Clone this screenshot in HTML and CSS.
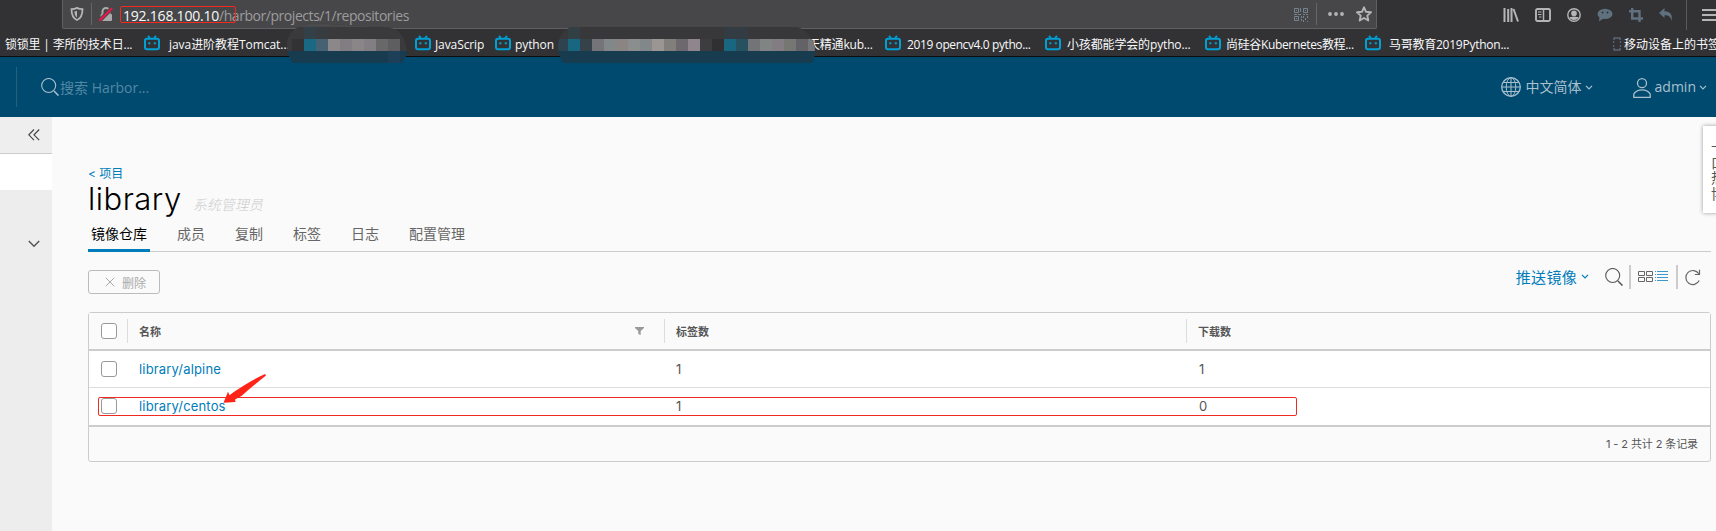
FILE: index.html
```html
<!DOCTYPE html>
<html lang="zh-CN">
<head>
<meta charset="utf-8">
<title>Harbor</title>
<link rel="stylesheet" href="styles.css">
</head>
<body>
<svg class="defs" aria-hidden="true">
  <symbol id="bili" viewBox="0 0 16 16"><path d="M4 .8 5.9 3M12 .8 10.1 3" stroke="#00a1d6" stroke-width="1.8" fill="none"/><rect x="1" y="3.7" width="14" height="10.6" rx="2" fill="none" stroke="#00a1d6" stroke-width="2"/><path d="M4.3 7.2h2v2h-2zM9.8 7.2h2v2h-2z" fill="#00a1d6"/></symbol>
  <symbol id="chev" viewBox="0 0 8 5"><path d="M1 .8l3 3 3-3" fill="none" stroke="currentColor" stroke-width="1.2"/></symbol>
  <symbol id="search" viewBox="0 0 18 18"><circle cx="7.7" cy="7.5" r="7" fill="none" stroke="currentColor" stroke-width="1.1"/><path d="M13 13l4.5 4.6" stroke="currentColor" stroke-width="1.5"/></symbol>
</svg>
<div class="browser">
  <div class="toolbar">
    <div class="urlbar">
      <svg class="shield" width="14" height="14" viewBox="0 0 14 14"><path d="M7 .9C5 2 3 2.200 1.500 2.200 1.500 7.500 2.500 11 7 13c4.500-2 5.500-5.500 5.500-10.800C11 2.200 9 2 7 .9z" fill="none" stroke="#b5b5b6" stroke-width="1.800"/><path d="M7 3.800v6.600C4.900 8.900 4.500 7 4.400 4.500 5.400 4.400 6.200 4.200 7 3.800z" fill="#b5b5b6"/></svg>
      <span class="urlsep"></span>
      <svg class="lock" width="14" height="15" viewBox="0 0 14 15"><path d="M3.500 8V4.500a3.500 3.500 0 0 1 7 0V8" fill="none" stroke="#a9a9aa" stroke-width="2"/><rect x="1.500" y="7" width="11.500" height="7" rx="1" fill="#a9a9aa"/><path d="M0 14.200 13.300.8" stroke="#474749" stroke-width="4"/><path d="M.3 13.700 13.200 1.200" stroke="#f0144b" stroke-width="2"/></svg>
      <span class="url"><b>192.168.100.10</b>/harbor/projects/1/repositories<i class="mark-url"></i></span>
      <svg class="qr" width="15" height="15" viewBox="0 0 15 15" fill="none" stroke="#76838f"><path d="M.5 1.500h4v4h-4zM9.500 1.500h4v4h-4zM.5 9.500h4v4h-4z"/><path d="M2 3.500h1M11 3.500h1M2 11.500h1M6.500 1v4M0 7.500h3m1 0h3m2 0h2m1 0h2M7.500 9v2m2-2v2m2 0v2m2-4v2m-6 1v2m2-1v2m4-1v2"/></svg>
      <span class="urlsep sep2"></span>
      <svg class="dots" width="16" height="4" viewBox="0 0 16 4" fill="#b5b5b6"><circle cx="2" cy="2" r="1.900"/><circle cx="8" cy="2" r="1.900"/><circle cx="14" cy="2" r="1.900"/></svg>
      <svg class="star" width="16" height="16" viewBox="0 0 16 16"><path d="M8 1.300l2 4.500 5 .5-3.700 3.300 1 4.900L8 12l-4.300 2.500 1-4.900L1 6.300l5-.5z" fill="none" stroke="#b5b5b6" stroke-width="1.900" stroke-linejoin="round"/></svg>
    </div>
    <div class="tools">
      <svg width="16" height="14" viewBox="0 0 16 14" stroke="#b5b5b6" stroke-width="2"><path d="M1.500 0v14M5.200 1v13M8.500 0v14M10.500 1l4.500 12.500"/></svg>
      <svg width="16" height="14" viewBox="0 0 16 14" fill="none" stroke="#b5b5b6"><rect x="1" y="1" width="14" height="12" rx="1.500" stroke-width="1.900"/><path d="M8.500 1v12" stroke-width="1.500"/><path d="M3 4h3.500M3 6.500h3.500M4 9h2.500" stroke-width="1.200"/></svg>
      <svg width="14" height="14" viewBox="0 0 14 14"><circle cx="7" cy="7" r="6.200" fill="none" stroke="#b5b5b6" stroke-width="1.400"/><circle cx="7" cy="5.400" r="2.800" fill="#b5b5b6"/><path d="M2.500 9.200C4 8.500 10 8.500 11.500 9.200 10.500 12.800 3.500 12.800 2.500 9.200z" fill="#b5b5b6"/></svg>
      <svg width="16" height="14" viewBox="0 0 16 14"><ellipse cx="8" cy="5.900" rx="7.500" ry="5.200" fill="#5f707e"/><path d="M2.500 9 2 13.500 7 10z" fill="#5f707e"/><circle cx="5.500" cy="4.500" r="1" fill="#323234"/><circle cx="10.500" cy="4.500" r="1" fill="#323234"/></svg>
      <svg width="14" height="14" viewBox="0 0 14 14" fill="none" stroke="#5f707e" stroke-width="2.4"><path d="M3.200 0v10.500H14M0 3.200h10.500V14"/></svg>
      <svg width="14" height="13" viewBox="0 0 14 13"><path d="M0 5 5.500 0v3.200C11 3.200 14 6.500 12.500 13 12 9 10 7.200 5.500 7.200V10z" fill="#5f707e"/></svg>
      <span class="toolsep"></span>
      <svg width="14" height="14" viewBox="0 0 14 14" stroke="#b5b5b6" stroke-width="2"><path d="M0 2h14M0 7h14M0 12h14"/></svg>
    </div>
  </div>
  <div class="bookmarks">
    <span class="bm bm1">锁锁里 | 李所的技术日...</span>
    <svg><use href="#bili"/></svg><span class="bm bm2">java进阶教程Tomcat...</span>
    <svg><use href="#bili"/></svg><span class="bm bm3">JavaScrip</span>
    <svg><use href="#bili"/></svg><span class="bm bm4">python</span>
    <span class="bm bm5">天精通kub...</span>
    <svg><use href="#bili"/></svg><span class="bm bm6">2019 opencv4.0 pytho...</span>
    <svg><use href="#bili"/></svg><span class="bm bm7">小孩都能学会的pytho...</span>
    <svg><use href="#bili"/></svg><span class="bm bm8">尚硅谷Kubernetes教程...</span>
    <svg><use href="#bili"/></svg><span class="bm bm9">马哥教育2019Python...</span>
    <svg class="phone" viewBox="0 0 8 14"><path d="M1 3V1h6v2M1 11v2h6v-2M.5 4v2m0 2v2m7-6v2m0 2v2" fill="none" stroke="#5a6673" stroke-width="1.500"/></svg><span class="bm bm10">移动设备上的书签</span>
  </div>
  <svg class="mosaic m1" width="120" height="41" viewBox="287 23 120 41" shape-rendering="crispEdges">
    <clipPath id="c1"><path d="M287 42C289 30 299 25 312 23L363 26 384 27C398 27 405 36 407 50 407 56 404 60 402 63H293C289 59 287 52 287 42z"/></clipPath>
    <g clip-path="url(#c1)"><path fill="#3a3a3c" d="M287 23h120v28H287z"/><path fill="#173b4f" d="M287 51h120v12H287z"/><path fill="#4a4a4c" d="M287 23h120v4H287z"/><path fill="#334047" d="M304 27h12v12h-12z"/><path fill="#363c40" d="M316 27h12v12h-12z"/><path fill="#323234" d="M292 39h12v12h-12z"/><path fill="#196884" d="M304 39h12v12h-12z"/><path fill="#466171" d="M316 39h12v12h-12z"/><path fill="#8c8889" d="M328 39h12v12h-12z"/><path fill="#817e83" d="M340 39h12v12h-12z"/><path fill="#8a8586" d="M352 39h12v12h-12z"/><path fill="#817f83" d="M364 39h12v12h-12z"/><path fill="#686868" d="M376 39h12v12h-12z"/><path fill="#5e5e60" d="M388 39h12v12h-12z"/><path fill="#1d4058" d="M388 51h12v12h-12z"/></g>
  </svg>
  <svg class="mosaic m2" width="257" height="41" viewBox="558 23 257 41" shape-rendering="crispEdges">
    <clipPath id="c2"><path d="M572 27H798C808 31 815 40 815 51 815 56 814 60 812 63H563C560 58 558 53 558 46 558 38 563 29 572 27z"/></clipPath>
    <g clip-path="url(#c2)"><path fill="#38383a" d="M558 27h257v24H558z"/><path fill="#173b4f" d="M558 51h257v12H558z"/><path fill="#2d4450" d="M558 39h10v12h-10z"/><path fill="#323f45" d="M568 27h12v12h-12z"/><path fill="#196680" d="M568 39h12v12h-12z"/><path fill="#35424a" d="M580 39h12v12h-12z"/><path fill="#747479" d="M592 39h12v12h-12z"/><path fill="#828789" d="M604 39h12v12h-12z"/><path fill="#8a8482" d="M616 39h12v12h-12z"/><path fill="#8a8e8e" d="M628 39h12v12h-12z"/><path fill="#82888a" d="M640 39h12v12h-12z"/><path fill="#9b9594" d="M652 39h12v12h-12z"/><path fill="#817f7c" d="M664 39h12v12h-12z"/><path fill="#6d686e" d="M676 39h12v12h-12z"/><path fill="#8e868c" d="M688 39h12v12h-12z"/><path fill="#3d3d3f" d="M700 39h12v12h-12z"/><path fill="#303032" d="M712 39h12v12h-12z"/><path fill="#333c42" d="M724 27h24v12h-24z"/><path fill="#196680" d="M724 39h12v12h-12z"/><path fill="#26515f" d="M736 39h12v12h-12z"/><path fill="#727478" d="M748 39h12v12h-12z"/><path fill="#808584" d="M760 39h12v12h-12z"/><path fill="#837c82" d="M772 39h12v12h-12z"/><path fill="#767673" d="M784 39h12v12h-12z"/><path fill="#636367" d="M796 39h12v12h-12z"/><path fill="#77777a" d="M808 39h7v12h-7z"/></g>
  </svg>
</div>
<header class="header">
  <span class="hsep"></span>
  <svg class="hsearch" width="18" height="18"><use href="#search"/></svg>
  <span class="placeholder">搜索 Harbor...</span>
  <div class="hmenu">
    <svg width="20" height="20" viewBox="0 0 20 20" fill="none" stroke="currentColor"><circle cx="10" cy="10" r="9.300" stroke-width="1.300"/><ellipse cx="10" cy="10" rx="4.800" ry="9.300"/><path d="M10 1v18M1 10h18M2.500 5.500h15M2.500 14.500h15"/></svg>
    <span class="lang">中文简体</span><svg class="hchev" width="8" height="5"><use href="#chev"/></svg>
    <svg class="user" width="18" height="20" viewBox="0 0 18 20" fill="none" stroke="currentColor" stroke-width="1.300"><circle cx="9" cy="5.200" r="4.500"/><path d="M.8 19.300V16c3.200-5.600 13.200-5.600 16.400 0v3.300z"/></svg>
    <span class="admin">admin</span><svg class="hchev" width="8" height="5"><use href="#chev"/></svg>
  </div>
</header>
<div class="body">
  <aside class="side">
    <div class="collapse"><svg width="12" height="12" viewBox="0 0 12 12" fill="none" stroke="#444" stroke-width="1.200"><path d="M6 .5.8 5.800 6 11.200M11.200.5 6 5.800l5.200 5.400"/></svg></div>
    <div class="current"></div>
    <div class="group"><svg width="12" height="8" viewBox="0 0 12 8"><path d="M.8 1 6 6.200 11.200 1" fill="none" stroke="#555" stroke-width="1.500"/></svg></div>
  </aside>
  <main class="main">
    <a class="back">&lt; 项目</a>
    <div class="title"><h1>library</h1><em>系统管理员</em></div>
    <nav class="tabs"><span class="on">镜像仓库</span><span>成员</span><span>复制</span><span>标签</span><span>日志</span><span>配置管理</span></nav>
    <div class="actions">
      <button class="delete"><svg width="10" height="10" viewBox="0 0 10 10"><path d="M.8.8l8.400 8.400M9.200.8.8 9.200" stroke="#aaa"/></svg>删除</button>
      <div class="right">
        <span class="push">推送镜像</span><svg class="pchev" width="8" height="5"><use href="#chev"/></svg>
        <svg class="find" width="18" height="18"><use href="#search"/></svg>
        <span class="vsep"></span>
        <svg class="cards" width="15" height="12" viewBox="0 0 15 12" fill="none" stroke="#666"><path d="M.5.5h6v4h-6zM8.500.5h6v4h-6zM.5 6.500h6v4h-6zM8.500 6.500h6v4h-6z"/></svg>
        <svg class="list" width="13" height="12" viewBox="0 0 13 12" stroke="#3a98cb"><path d="M0 .5h1m1 0h11M0 3.500h1m1 0h11M0 6.500h1m1 0h11M0 9.500h1m1 0h11"/></svg>
        <span class="vsep"></span>
        <svg class="refresh" width="16" height="17" viewBox="0 0 16 17" fill="none" stroke="#666" stroke-width="1.200"><path d="M14.200 11.500A7 7 0 1 1 13.800 4.800M14.500.8v4.700H9.800"/></svg>
      </div>
    </div>
    <section class="grid">
      <div class="row head"><span class="check"><i></i></span><span class="name">名称<svg width="9" height="8" viewBox="0 0 9 8"><path d="M0 0h9v1L5.700 4v4L3.300 7V4L0 1z" fill="#999"/></svg></span><span class="tags">标签数</span><span class="pulls">下载数</span></div>
      <div class="row"><span class="check"><i></i></span><a class="name">library/alpine</a><span class="tags">1</span><span class="pulls">1</span></div>
      <div class="row last"><span class="check"><i></i></span><a class="name">library/centos</a><span class="tags">1</span><span class="pulls">0</span></div>
      <div class="foot">1 - 2 共计 2 条记录</div>
      <div class="mark-row"></div>
      <svg class="arrow" width="44" height="31" viewBox="0 0 44 31"><path d="M42 0 43 1.500C35 8 26 15 18.500 22L12 25.500 12.500 28 .5 28.800 5 17.800 6.500 21.300 11.500 17.500C21 11 33 4 42 0z" fill="#ff2418"/></svg>
    </section>
  </main>
  <div class="widget">卡口热博</div>
</div>
</body>
</html>
```
FILE: styles.css
```css
* { box-sizing: border-box; }
body { margin: 0; width: 1716px; height: 531px; overflow: hidden; background: #fafafa; color: #565656; font-family: Inter, "Noto Sans CJK SC", sans-serif; font-size: 13px; }
svg { display: block; flex: none; }
span, a { white-space: nowrap; }
.defs { position: absolute; width: 0; height: 0; }

.browser { position: relative; height: 57px; background: #323234; border-bottom: 1px solid #0c0c0d; font-family: "Open Sans", "Noto Sans CJK SC", sans-serif; color: #f9f9fa; }
.toolbar { display: flex; height: 29px; }
.urlbar { display: flex; align-items: center; width: 1317px; margin-left: 62px; background: #474749; border: 1px solid #606062; border-top: 0; border-radius: 0 0 2px 2px; }
.shield { margin-left: 7px; }
.urlsep { width: 1px; height: 22px; margin-left: 7px; background: #65656a; }
.lock { margin-left: 7px; }
.url { position: relative; margin-left: 10px; width: 1163px; font-size: 14px; line-height: 20px; letter-spacing: -.45px; color: #9c9c9e; margin-top: 3px; }
.url b { font-weight: 400; letter-spacing: -.22px; color: #f9f9fa; }
.mark-url { position: absolute; left: -3px; top: 0; width: 116px; height: 17px; border: 1px solid #f02a20; border-radius: 2px; }
.qr { margin-left: 8px; }
.sep2 { margin-left: 7px; }
.dots { margin-left: 11px; }
.star { margin-left: 12px; }
.tools { display: flex; align-items: center; gap: 16px; margin-left: 126px; }
.toolsep { width: 1px; height: 31px; margin: 0 -1px 0 -3px; background: #5b5b5e; }

.bookmarks { display: flex; align-items: center; height: 27px; margin-top: 1px; padding-left: 5px; font-size: 12px; overflow: hidden; }
.bookmarks svg { width: 16px; height: 16px; margin-top: -2px; }
.bookmarks .phone { width: 8px; height: 14px; margin-top: 0; }
.bm { flex: none; line-height: 27px; margin-top: 1px; }
.bm1 { width: 139px; letter-spacing: -.2px; }
.bm2 { width: 255px; padding-left: 9px; letter-spacing: -.05px; }
.bm3 { width: 64px; padding-left: 4px; letter-spacing: -.1px; }
.bm4 { width: 297px; padding-left: 4px; letter-spacing: -.1px; }
.bm5 { width: 77px; letter-spacing: -.2px; }
.bm6 { width: 144px; padding-left: 6px; letter-spacing: -.4px; }
.bm7 { width: 144px; padding-left: 6px; letter-spacing: -.15px; }
.bm8 { width: 144px; padding-left: 5px; letter-spacing: -.35px; }
.bm9 { width: 232px; padding-left: 8px; letter-spacing: -.25px; }
.bm10 { padding-left: 3px; }
.mosaic { position: absolute; top: 23px; }
.m1 { left: 287px; }
.m2 { left: 558px; }

.header { display: flex; align-items: center; height: 60px; background: #004a70; color: #a9c0cd; font-family: "Open Sans", "Noto Sans CJK SC", sans-serif; font-size: 14px; }
.hsep { width: 1px; height: 40px; margin-left: 16px; background: #24607f; }
.hsearch { margin-left: 24px; }
.placeholder { margin-left: 1px; margin-top: -1px; color: #5388a3; }
.hmenu { display: flex; align-items: center; margin-left: auto; padding-right: 9px; }
.lang { margin-left: 5px; margin-top: -2px; }
.hchev { margin-left: 3px; }
.user { margin-left: 40px; margin-top: 1px; }
.admin { margin-left: 4px; margin-top: -2px; }

.body { position: relative; display: flex; height: 414px; }
.side { width: 52px; background: #ededed; }
.collapse { height: 37px; padding: 12px 0 0 28px; background: #eee; border-bottom: 1px solid #ccc; }
.current { height: 36px; background: #fff; }
.group { padding: 50px 0 0 28px; }
.main { width: 1623px; margin-left: 36px; padding-top: 47px; }
.back { display: block; height: 19px; line-height: 20px; font-size: 12px; color: #007cbb; }
.title { display: flex; align-items: baseline; height: 41px; }
h1 { margin: 0; font-size: 31px; font-weight: 300; line-height: 31px; letter-spacing: .5px; color: #000; }
.title em { margin-left: 11px; font-size: 14px; font-weight: 300; color: #ccc; }
.tabs { display: flex; height: 28px; gap: 24px; border-bottom: 1px solid #ccc; font-size: 14px; line-height: 20px; }
.tabs span { height: 28px; padding: 0 3px; color: #666; }
.tabs .on { border-bottom: 3px solid #007cbb; color: #000; }
.actions { display: flex; justify-content: space-between; height: 60px; }
.delete { display: flex; align-items: center; gap: 7px; width: 72px; height: 24px; margin-top: 18px; padding: 0 0 0 16px; background: none; border: 1px solid #bbb; border-radius: 3px; color: #aaa; font: 12px "Noto Sans CJK SC", sans-serif; }
.right { display: flex; align-items: center; height: 24px; margin-top: 13px; color: #565656; }
.push { margin-top: -2px; color: #007cbb; font-size: 15px; letter-spacing: .3px; }
.pchev { margin-left: 4px; margin-top: -2px; color: #007cbb; }
.find { margin-left: 16px; }
.vsep { width: 2px; height: 24px; margin-left: 6px; background: #ccc; }
.cards { margin-left: 7px; }
.list { margin-left: 2px; margin-right: 2px; }
.refresh { margin: 0 10px 0 7px; }

.grid { position: relative; height: 150px; border: 1px solid #ccc; border-radius: 3px; }
.row { display: grid; grid-template-columns: 38px 537px 522px 1fr; align-items: center; height: 37px; background: #fff; border-bottom: 1px solid #ddd; }
.head { height: 38px; background: #fafafa; border-bottom: 2px solid #ccc; font-size: 11px; font-weight: 700; }
.last { height: 39px; padding-bottom: 2px; border-bottom: 2px solid #ccc; }
.row > span, .row > a { display: flex; align-items: center; height: 24px; padding-left: 12px; }
.head > span + span { border-left: 1px solid #ddd; padding-left: 11px; }
.row > .check { padding-left: 12px; }
.check i { width: 16px; height: 16px; border: 1px solid #999; border-radius: 3px; background: #fff; }
a.name { color: #007cbb; letter-spacing: .17px; }
.head .name { justify-content: space-between; padding-right: 20px; }
.row:not(.head) .pulls { padding-left: 13px; }
.foot { padding-right: 12px; text-align: right; font-size: 11px; line-height: 34px; letter-spacing: -.1px; }
.mark-row { position: absolute; left: 9px; top: 84px; width: 1199px; height: 19px; border: 1px solid #f02a20; border-radius: 2px; }
.arrow { position: absolute; left: 134px; top: 61px; }
.widget { position: absolute; left: 1703px; top: 9px; width: 24px; height: 87px; padding: 13px 0 0 8px; background: #fff; box-shadow: 0 0 4px #999; font-size: 14px; line-height: 15.500px; word-break: break-all; }
```
